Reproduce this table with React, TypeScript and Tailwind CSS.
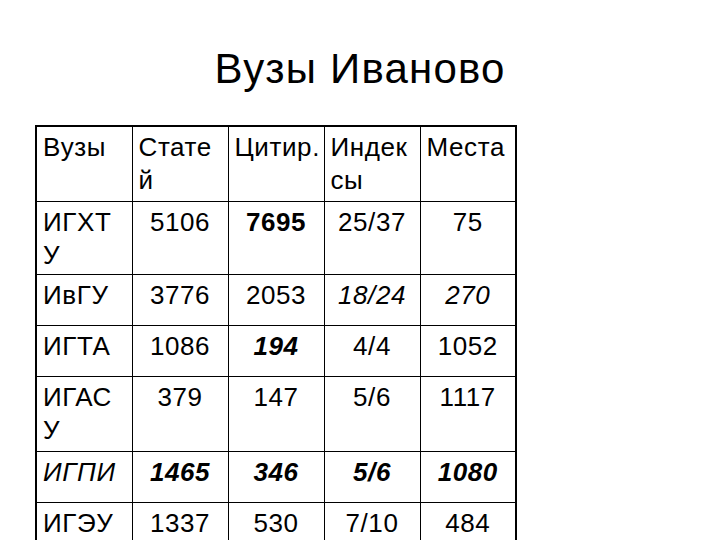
const rows: { h: string; cells: { t: string; c?: string }[] }[] = [
  {
    h: "h-[75px]",
    cells: [{ t: "Вузы" }, { t: "Стате\nй" }, { t: "Цитир." }, { t: "Индек\nсы" }, { t: "Места" }],
  },
  {
    h: "h-[73px]",
    cells: [
      { t: "ИГХТ\nУ" },
      { t: "5106", c: "text-center" },
      { t: "7695", c: "text-center font-bold" },
      { t: "25/37", c: "text-center" },
      { t: "75", c: "text-center" },
    ],
  },
  {
    h: "h-[51px]",
    cells: [
      { t: "ИвГУ" },
      { t: "3776", c: "text-center" },
      { t: "2053", c: "text-center" },
      { t: "18/24", c: "text-center italic" },
      { t: "270", c: "text-center italic" },
    ],
  },
  {
    h: "h-[51px]",
    cells: [
      { t: "ИГТА" },
      { t: "1086", c: "text-center" },
      { t: "194", c: "text-center font-bold italic" },
      { t: "4/4", c: "text-center" },
      { t: "1052", c: "text-center" },
    ],
  },
  {
    h: "h-[75px]",
    cells: [
      { t: "ИГАС\nУ" },
      { t: "379", c: "text-center" },
      { t: "147", c: "text-center" },
      { t: "5/6", c: "text-center" },
      { t: "1117", c: "text-center" },
    ],
  },
  {
    h: "h-[51px]",
    cells: [
      { t: "ИГПИ", c: "italic" },
      { t: "1465", c: "text-center font-bold italic" },
      { t: "346", c: "text-center font-bold italic" },
      { t: "5/6", c: "text-center font-bold italic" },
      { t: "1080", c: "text-center font-bold italic" },
    ],
  },
  {
    h: "h-[51px]",
    cells: [
      { t: "ИГЭУ" },
      { t: "1337", c: "text-center" },
      { t: "530", c: "text-center" },
      { t: "7/10", c: "text-center" },
      { t: "484", c: "text-center" },
    ],
  },
];

export default function App() {
  return (
    <div className="h-[540px] w-[720px] overflow-hidden bg-white text-black [font-family:'Liberation_Sans',Arial,sans-serif]">
      <h1 className="pt-[45px] text-center text-[42px] leading-[48px] tracking-[1.2px]">Вузы Иваново</h1>
      <table className="mt-[32px] ml-[35px] w-[482px] table-fixed border-collapse border-2 border-black text-[26px] leading-[33px] tracking-[0.6px]">
        <tbody>
          {rows.map((row, i) => (
            <tr key={i} className={row.h}>
              {row.cells.map((cell, j) => (
                <td
                  key={j}
                  className={`border border-black px-[6px] pt-[4px] align-top whitespace-pre ${cell.c ?? "text-left"}`}
                >
                  {cell.t}
                </td>
              ))}
            </tr>
          ))}
        </tbody>
      </table>
    </div>
  );
}
